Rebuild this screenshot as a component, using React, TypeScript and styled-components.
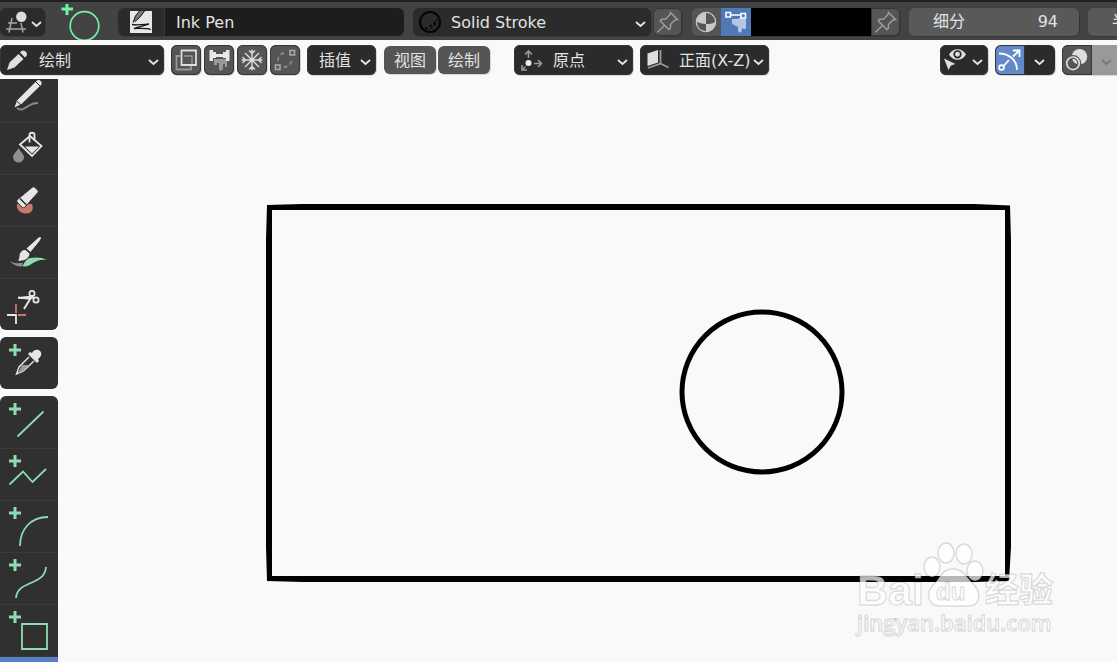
import React from "react";
import styled, { createGlobalStyle, css } from "styled-components";

const GlobalStyle = createGlobalStyle`
  *, *::before, *::after { box-sizing: border-box; }
  html, body { margin: 0; background: #f9f9f9; overflow: hidden; }
  body, button, input, select {
    font-family: "DejaVu Sans", "Noto Sans CJK SC", sans-serif;
    font-size: 16px;
    line-height: 20px;
    color: #e2e2e2;
  }
  button, input, select { border: 0; margin: 0; padding: 0; background: none; }
  svg { display: block; flex: none; }
`;

const mint = "#8fdcb3";

const Shell = styled.div`
  display: flex;
  flex-direction: column;
  height: 100vh;
`;

const ToolSettings = styled.header`
  display: flex;
  align-items: center;
  flex: none;
  height: 40px;
  padding-top: 2px;
  border-top: 2px solid #202020;
  background: #434343;
  overflow: hidden;
`;

const ViewHeader = styled.nav`
  display: flex;
  align-items: center;
  flex: none;
  height: 39px;
  padding-top: 1px;
  overflow: hidden;
`;

const Cluster = styled.div<{ $gap?: number; $left?: number; $push?: boolean }>`
  display: flex;
  align-items: center;
  flex: none;
  gap: ${(p) => p.$gap ?? 0}px;
  margin-left: ${(p) => (p.$push ? "auto" : `${p.$left ?? 0}px`)};
`;

const tones = {
  dark: "#2b2b2b",
  grey: "#555555",
  blue: "#5079b7",
  sky: "#6389c8",
  black: "#000000",
  faded: "#999999",
};

type Box = {
  $w: number;
  $h?: number;
  $tone?: keyof typeof tones;
  $round?: "all" | "left" | "right" | "none";
  $edge?: boolean;
};

const radii = { all: "6px", left: "6px 0 0 6px", right: "0 6px 6px 0", none: "0" };

const boxStyle = css<Box>`
  display: flex;
  align-items: center;
  flex: none;
  width: ${(p) => p.$w}px;
  height: ${(p) => p.$h ?? 30}px;
  background: ${(p) => tones[p.$tone ?? "dark"]};
  border-radius: ${(p) => radii[p.$round ?? "all"]};
  box-shadow: ${(p) => (p.$edge ? "inset 0 0 0 1px #363636, " : "")}1px 1px 0 rgba(0, 0, 0, 0.14);
  overflow: hidden;
`;

const Button = styled.button<Box>`
  ${boxStyle}
`;

const TextButton = styled(Button)`
  justify-content: center;
  padding-top: 2px;
`;

const DropFrame = styled.label<Box>`
  ${boxStyle}
  padding-right: 4px;
`;

const Select = styled.select<{ $indent?: number }>`
  appearance: none;
  flex: 1;
  min-width: 0;
  height: 100%;
  padding: 2px 0 0 ${(p) => p.$indent ?? 0}px;
  outline: 0;
`;

const NameInput = styled.input`
  flex: none;
  width: 239px;
  height: 28px;
  margin-left: 1px;
  padding-left: 11px;
  border-radius: 0 6px 6px 0;
  background: #1d1d1d;
  outline: 0;
`;

const NumberField = styled.label`
  display: flex;
  align-items: center;
  flex: none;
  width: 170px;
  height: 28px;
  padding: 0 21px 0 24px;
  border-radius: 6px;
  background: #595959;
  box-shadow: 1px 1px 0 rgba(0, 0, 0, 0.2);
`;

const NumberInput = styled.input`
  flex: 1;
  min-width: 0;
  text-align: right;
  outline: 0;
`;

const Workspace = styled.main`
  display: flex;
  flex: 1;
  min-height: 0;
`;

const Toolbar = styled.aside`
  display: flex;
  flex-direction: column;
  flex: none;
  gap: 7px;
  width: 58px;
  overflow: hidden;
`;

const ToolGroup = styled.div<{ $open?: "top" | "bottom" }>`
  display: flex;
  flex-direction: column;
  flex: none;
  border-radius: ${(p) =>
    p.$open === "top" ? "0 0 6px 6px" : p.$open === "bottom" ? "6px 6px 0 0" : "6px"};
  background: #303030;
  overflow: hidden;
`;

const ToolButton = styled.button<{ $cut?: boolean; $active?: boolean }>`
  display: flex;
  align-items: flex-end;
  width: 58px;
  height: ${(p) => (p.$cut ? 43 : 52)}px;
  overflow: hidden;
  background: ${(p) => (p.$active ? "#5680c2" : "transparent")};
  & + & { border-top: 1px solid #393939; }
`;

const Canvas = styled.section`
  flex: 1;
  min-width: 0;
  overflow: hidden;
`;

const Sheet = styled.svg`
  width: 100%;
  height: 100%;
`;

const Mark = styled.text<{ $size: number; $face?: string; $weight?: number }>`
  font-family: ${(p) => p.$face ?? '"Liberation Sans"'}, sans-serif;
  font-size: ${(p) => p.$size}px;
  font-weight: ${(p) => p.$weight ?? 700};
`;

const Chevron = () => (
  <svg width="13" height="14" viewBox="0 0 13 14" fill="none" stroke="#e6e6e6" strokeWidth="1.8">
    <path d="M2 7l4.500 4L11 7" />
  </svg>
);

const Icon = ({ w = 30, h = 30, children }: { w?: number; h?: number; children: React.ReactNode }) => (
  <svg width={w} height={h} viewBox={`0 0 ${w} ${h}`} fill="none" stroke="#dcdcdc" strokeWidth="1.8">
    {children}
  </svg>
);

const Pin = () => (
  <Icon w={29} h={28}>
    <path
      d="M17.5 4.5l7 7-2.5.4-4.6 4.6v3.7l-1.6 1.3-8.6-8.6 1.2-1.7h3.9l4.6-4.5zM11.5 17.5l-7 6.8"
      stroke="#9c9c9c"
      strokeWidth="1.5"
    />
  </Icon>
);

const ToolIcon = ({ plus, children }: { plus?: boolean; children: React.ReactNode }) => (
  <svg
    width="58" height="52" viewBox="0 0 58 52" fill="none"
    stroke={plus ? mint : "#e6e6e6"} strokeWidth="1.8"
  >
    {plus && <path d="M9 13h12M15 7v12" strokeWidth="3" />}
    {children}
  </svg>
);

const Tool = ({ name, cut, plus, children }: {
  name: string; cut?: boolean; plus?: boolean; children: React.ReactNode;
}) => (
  <ToolButton aria-label={name} $cut={cut}>
    <ToolIcon plus={plus}>{children}</ToolIcon>
  </ToolButton>
);

function TopBar() {
  return (
    <ToolSettings>
      <Button $w={45} $h={28} aria-label="Editor type">
        <Icon h={28}>
          <path d="M8 15h9M6 21h20M12 10l-3 14.500M21 15l2 9.500" stroke="#a5a5a5" strokeWidth="1.5" />
          <circle cx="21.300" cy="8.700" r="5.200" fill="#dcdcdc" stroke="none" />
        </Icon>
        <Chevron />
      </Button>
      <svg width="73" height="36" viewBox="45 4 73 36" fill="none" stroke="#6ff2a6">
        <path d="M61.500 9h11.500M67 4v11" strokeWidth="3" />
        <circle cx="84.500" cy="26" r="14.300" strokeWidth="1.700" />
      </svg>
      <Button $w={46} $h={28} $round="left" aria-label="Brush">
        <svg width="46" height="28" viewBox="0 0 46 28">
          <path d="M12 3h22v22H12z" fill="#e8e8e8" />
          <path d="M15 14.500l2-6.500 4-5h6l-5 6.500-5 4.500z" fill="#777" />
          <path d="M15 14.500l2.500-6.500 4-5M17 13.500l5-4.500 4.500-6" fill="none" stroke="#222" strokeWidth="1" />
          <path d="M14 16.500c6 1 11 0 17-.5-5 2-11 3-15 4.500 6 0 12-.5 17 1" fill="none" stroke="#151515" strokeWidth="1.300" />
        </svg>
      </Button>
      <NameInput aria-label="Brush name" defaultValue="Ink Pen" />
      <Cluster $left={9} $gap={2}>
        <DropFrame $w={238} $h={28}>
          <svg width="38" height="28" viewBox="0 0 38 28" fill="none" stroke="#050505">
            <circle cx="17" cy="14" r="10" strokeWidth="2.200" />
            <path d="M12 20c6 2 11-2 12-9M16 18c3 0 5-2 6-5" strokeDasharray="3 2" strokeWidth="1.500" />
          </svg>
          <Select aria-label="Material"><option>Solid Stroke</option></Select>
          <Chevron />
        </DropFrame>
        <Button $w={29} $h={28} $tone="grey" $edge aria-label="Pin material"><Pin /></Button>
      </Cluster>
      <Cluster $left={10}>
        <Button $w={29} $h={28} $tone="grey" $round="left" aria-label="Material color">
          <Icon w={29} h={28}>
            <circle cx="14" cy="14" r="9.800" fill="#c9c9c9" stroke="#c9c9c9" strokeWidth="1" />
            <path d="M14 5c5 0 9 4 9 9-3 2-6 2-9 2zM14 16c-3 0-6-1-9-2 0 5 4 9 9 9z" fill="#555" stroke="none" />
          </Icon>
        </Button>
        <Button $w={30} $h={28} $tone="blue" $round="none" aria-label="Vertex color">
          <Icon h={28}>
            <path d="M11 11h5l3-1 6 1v9c-1 2-3 1-3 0-1 0-1 3-2 4-2 1-3 0-3-2v-4c-2 1-3 0-3-1-2 0-3-1-3-2z" fill="#b6c7e4" stroke="none" />
            <path d="M10 7h10M5 4.500h4.500V9H5zM20 5.500h4.500V10H20z" stroke="#fff" strokeWidth="1.600" />
          </Icon>
        </Button>
        <Button $w={120} $h={28} $tone="black" $round="none" aria-label="Color" />
        <Button $w={29} $h={28} $tone="grey" $round="right" $edge aria-label="Pin color"><Pin /></Button>
      </Cluster>
      <Cluster $left={9} $gap={9}>
        <NumberField>细分<NumberInput defaultValue="94" /></NumberField>
        <NumberField>半<NumberInput /></NumberField>
      </Cluster>
    </ToolSettings>
  );
}

function HeaderBar() {
  return (
    <ViewHeader>
      <DropFrame $w={164} $edge>
        <svg width="39" height="30" viewBox="0 0 39 30" fill="#dedede">
          <path d="M7 25l2.500-7.500L18.500 9l5 5-9 8.500zM20 7.500l1.500-1.500c2.500-2 7 2 5 5L25 12.500z" />
        </svg>
        <Select aria-label="Mode"><option>绘制</option></Select>
        <Chevron />
      </DropFrame>
      <Cluster $left={7} $gap={3}>
        <Button $w={30} $tone="grey" $edge aria-label="Draw on back">
          <Icon>
            <path d="M9 11H5.500v13.500H20V21" stroke="#999" />
            <path d="M13 11h8v9" stroke="#999" strokeWidth="1.300" />
            <path d="M10.500 5.500H25V20H10.500z" />
          </Icon>
        </Button>
        <Button $w={30} $tone="grey" $edge aria-label="Automerge">
          <Icon>
            <path d="M10 14h13v8h-2v-3h-2v5c-1 2-4 2-4 0v-6h-2v2h-3z" fill="#999" stroke="none" />
            <path d="M5.500 5h3.500v11H5.500zM22 5h3.500v11H22zM9 7h3v6H9zM19 7h3v6h-3zM12 9h7v3h-7z" fill="#e8e8e8" stroke="none" />
          </Icon>
        </Button>
        <Button $w={30} $tone="grey" $edge aria-label="Additive drawing">
          <Icon>
            <path d="M15 4.500v21M4.500 15h21M8 8l14 14M22 8L8 22M12 5.500l3 3 3-3M12 24.500l3-3 3 3M5.500 12l3 3-3 3M24.500 12l-3 3 3 3" strokeWidth="1.400" />
          </Icon>
        </Button>
        <Button $w={30} $tone="grey" $edge aria-label="Multiframe">
          <Icon>
            <path d="M20 5.500h4.500V10H20zM5.500 20H10v4.500H5.500z" stroke="#aaa" strokeWidth="1.600" />
            <path d="M8 16c0-5 3-8 8-8.500M13.500 22c5 0 8-3 8.500-8" stroke="#909090" strokeWidth="1.600" strokeDasharray="4 3" />
          </Icon>
        </Button>
      </Cluster>
      <Cluster $left={7}>
        <DropFrame $w={69} $edge>
          <Select $indent={12} aria-label="Interpolate"><option>插值</option></Select>
          <Chevron />
        </DropFrame>
      </Cluster>
      <Cluster $left={8} $gap={2}>
        <TextButton $w={52} $h={28} $tone="grey">视图</TextButton>
        <TextButton $w={52} $h={28} $tone="grey">绘制</TextButton>
      </Cluster>
      <Cluster $left={24} $gap={7}>
        <DropFrame $w={119} $edge>
          <Icon w={39}>
            <path d="M14.500 13V6M11 9.500L14.500 6 18 9.500M20 18.500h7M24 15l3.500 3.500L24 22M11.500 21.500l-3 3M8 20v5h5" stroke="#999" strokeWidth="1.600" />
            <circle cx="14.500" cy="18" r="3" fill="#eee" stroke="none" />
          </Icon>
          <Select aria-label="Stroke placement"><option>原点</option></Select>
          <Chevron />
        </DropFrame>
        <DropFrame $w={129} $edge>
          <Icon w={39}>
            <path d="M20.500 5v13.500L8 23M20.500 18.500l8 4" stroke="#999" />
            <path d="M7.500 8.500L18 5v12.500L7.500 21z" fill="#dedede" stroke="none" />
          </Icon>
          <Select aria-label="Drawing plane"><option>正面(X-Z)</option></Select>
          <Chevron />
        </DropFrame>
      </Cluster>
      <Cluster $push $gap={7}>
        <Button $w={48} $edge aria-label="Object visibility">
          <Icon w={31}>
            <path d="M9 9.500c4-7 13-7 17 0-4 7-13 7-17 0z" fill="#dedede" stroke="none" />
            <circle cx="17.500" cy="9.300" r="3.300" fill="#dedede" stroke="#2b2b2b" strokeWidth="1.700" />
            <path d="M4 13.500l11.500 5.500-4.500 1.500L8.500 25z" fill="#dedede" stroke="none" />
          </Icon>
          <Chevron />
        </Button>
        <Cluster>
          <Button $w={30} $tone="sky" $round="left" $edge aria-label="Show gizmos">
            <Icon>
              <path d="M4 8.500C14 8.500 22 15 22 25M8.500 21l5.500-6M18 11.500l6.500-6M18 5.500h6.500V12" stroke="#fff" />
              <circle cx="6.500" cy="22.500" r="2.400" stroke="#fff" />
            </Icon>
          </Button>
          <Button $w={30} $round="right" aria-label="Gizmo options">
            <Icon><path d="M10 15l4.500 4 4.500-4" stroke="#e6e6e6" /></Icon>
          </Button>
        </Cluster>
        <Cluster>
          <Button $w={30} $tone="grey" $round="left" $edge aria-label="Show overlays">
            <Icon>
              <circle cx="17.500" cy="11.700" r="7.700" fill="#dedede" stroke="none" />
              <circle cx="11" cy="18.300" r="6.300" stroke="#555" strokeWidth="4" />
              <circle cx="11" cy="18.300" r="6.300" strokeWidth="1.700" />
            </Icon>
          </Button>
          <Button $w={25} $tone="faded" $round="none" aria-label="Overlay options">
            <svg width="25" height="30" viewBox="0 0 25 30" fill="none" stroke="#777" strokeWidth="1.800">
              <path d="M10 15l4.500 4 4.500-4" />
            </svg>
          </Button>
        </Cluster>
      </Cluster>
    </ViewHeader>
  );
}

function Tools() {
  return (
    <Toolbar>
      <ToolGroup $open="top">
        <Tool name="Draw" cut>
          <path d="M17 38c5 4 9-1 13-3 3-2 6-2 8-2" stroke="#8c8c8c" />
          <path d="M14.500 37.500l2.500-7L36 11.500c1-1 2-2 4-1s2 3 1 4.500L21.500 34z" fill="#e6e6e6" stroke="none" />
          <path d="M35.500 11.500l4.500 4.500M16.500 31l4.500 4" stroke="#303030" strokeWidth="1" />
        </Tool>
        <Tool name="Fill">
          <path d="M20 22.500L30 14l11.500 10L32 34z" />
          <path d="M25 24.500h14L32 31.500z" fill="#e6e6e6" stroke="none" />
          <path d="M29.500 20.500V13c0-3 5-3 5 0v6" />
          <path d="M18.500 26c2 4 5.500 6 5.500 9a5.500 5.500 0 0 1-11 0c0-3 3.500-5 5.500-9z" fill="#8f8f8f" stroke="none" />
        </Tool>
        <Tool name="Erase">
          <path d="M17 30c-1 5 3 9.500 9 9.500s8-5 6-9.500z" fill="#c9786e" stroke="none" />
          <path d="M32 13.500c1-1 2-1 3 0l2.500 2.500c1 1 1 2 0 3L25 33c-1 1-2 1-3 0l-4.500-4.500c-1-1-1-2 0-3z" fill="#e6e6e6" stroke="#303030" strokeWidth="1" />
          <path d="M20 24.500l6.500 6.500" stroke="#303030" strokeWidth="1.500" />
        </Tool>
        <Tool name="Tint">
          <path d="M10 35c4 3 8 2 13 2l-1 3.500c-5 0-10-2-12-5.500z" fill="#8c8c8c" stroke="none" />
          <path d="M22 40c3-2 2-6 8-8 6-1 12-1 17 2-7-1-10 1-14 3-4 3-7 4-11 3z" fill={mint} stroke="none" />
          <path d="M40.500 11c1 1 0 2-1 4l-9 11-4-3.500L37 13c2-2 3-2 3.500-2zM25.500 24l4 3.500c0 5-6 8-11.500 7 2-2 1-4 2-7 1-2 3-4 5.500-3.500z" fill="#e6e6e6" stroke="none" />
        </Tool>
        <Tool name="Cutter">
          <path d="M18 19.500l10 1 6-1M18 20l15-1.500M24 31l8-13" strokeWidth="2" />
          <circle cx="32" cy="15.500" r="2.600" />
          <circle cx="36" cy="22" r="2.600" />
          <path d="M16 26v9M18 37h8" stroke="#c9786e" />
          <path d="M7 37h9v9" />
        </Tool>
      </ToolGroup>
      <ToolGroup>
        <Tool name="Eyedropper" plus>
          <path d="M29 20l-10 10-2.500 7 7-3L34 24" stroke="#e6e6e6" strokeWidth="1.400" />
          <path d="M22 28h7l-6 6-5 2z" fill="#9b9b9b" stroke="none" />
          <path d="M28 17l2-2 2 1c2-4 6-4 8-2s2 5-2 8l1 2-2 2z" fill="#e6e6e6" stroke="none" />
        </Tool>
      </ToolGroup>
      <ToolGroup $open="bottom">
        <Tool name="Line" plus><path d="M17.500 40.500l26-25" /></Tool>
        <Tool name="Polyline" plus><path d="M9.500 36.500L23 23.500l9.500 10.500L46 21" /></Tool>
        <Tool name="Arc" plus><path d="M20 46c0-16 10-29 28-29" /></Tool>
        <Tool name="Curve" plus><path d="M16 46c1-18 29-12 30-31" /></Tool>
        <Tool name="Box" plus><path d="M22 20h25v25H22z" /></Tool>
        <ToolButton aria-label="Circle" $active />
      </ToolGroup>
    </Toolbar>
  );
}

function Drawing() {
  return (
    <Canvas>
      <Sheet>
        <path
          d="M209 126l35-1h673l35 1.500 1 35V468l-2 34-34 1H244l-35-1-1-34V161zM214 131v366h733V131z"
          fillRule="evenodd"
        />
        <circle cx="704" cy="313" r="80" fill="none" stroke="#000" strokeWidth="5" />
        <g fill="#fff" fillOpacity="0.72" stroke="#000" strokeOpacity="0.13" strokeWidth="1.500">
          <ellipse cx="874" cy="488" rx="8" ry="10" />
          <ellipse cx="888" cy="474" rx="8" ry="10" />
          <ellipse cx="906" cy="475" rx="8" ry="10" />
          <ellipse cx="917" cy="492" rx="8" ry="10" />
          <path d="M895 490c-11 0-13 9-19 15-10 10-5 22 6 22h28c12 0 14-12 6-21-7-7-10-16-21-16z" />
          <Mark x="799" y="526" $size={43}>Bai</Mark>
          <Mark x="878" y="521" $size={24}>du</Mark>
          <Mark x="927" y="523" $size={34} $face='"Noto Sans CJK SC"'>经验</Mark>
          <Mark x="799" y="552" $size={22} $face='"Open Sans"' $weight={600}>jingyan.baidu.com</Mark>
        </g>
      </Sheet>
    </Canvas>
  );
}

export default function App() {
  return (
    <Shell>
      <GlobalStyle />
      <TopBar />
      <HeaderBar />
      <Workspace>
        <Tools />
        <Drawing />
      </Workspace>
    </Shell>
  );
}
